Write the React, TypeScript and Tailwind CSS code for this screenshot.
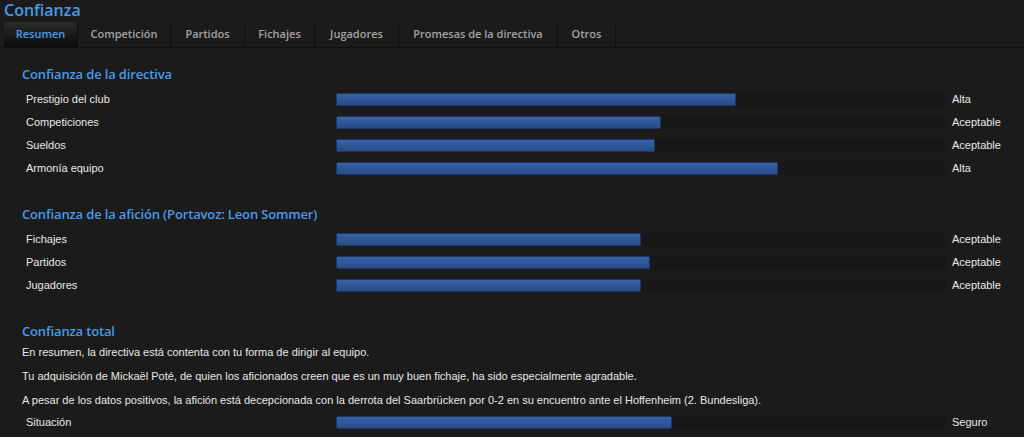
const tabs = [
  { name: 'Resumen', w: 74 },
  { name: 'Competición', w: 93 },
  { name: 'Partidos', w: 74 },
  { name: 'Fichajes', w: 70 },
  { name: 'Jugadores', w: 84 },
  { name: 'Promesas de la directiva', w: 159 },
  { name: 'Otros', w: 58 },
]

const board = [
  { label: 'Prestigio del club', fill: 400, value: 'Alta' },
  { label: 'Competiciones', fill: 325, value: 'Aceptable' },
  { label: 'Sueldos', fill: 319, value: 'Aceptable' },
  { label: 'Armonía equipo', fill: 442, value: 'Alta' },
]

const fans = [
  { label: 'Fichajes', fill: 305, value: 'Aceptable' },
  { label: 'Partidos', fill: 314, value: 'Aceptable' },
  { label: 'Jugadores', fill: 305, value: 'Aceptable' },
]

const heading = "font-['Open_Sans',sans-serif] font-semibold text-[#4a9ae6]"
const sectionHead = `h-[22px] text-[13px] leading-[24px] tracking-[-0.15px] ${heading}`

function BarRow({ label, fill, value }: { label: string; fill: number; value: string }) {
  return (
    <div className="flex h-[23px] items-center text-[11px] text-[#e8e8e8]">
      <div className="w-[314px] pl-[4px]">{label}</div>
      <div className="relative h-[13px] w-[609px] bg-[#181818] border border-[#161616]">
        <div
          className="absolute -left-px -top-px h-[13px] rounded-[1px] border border-[#1c3563] bg-gradient-to-b from-[#3663a8] to-[#284b87]"
          style={{ width: fill }}
        />
      </div>
      <div className="pl-[7px]">{value}</div>
    </div>
  )
}

export default function App() {
  return (
    <div className="h-[437px] w-full overflow-hidden bg-[#1b1b1b] font-['Liberation_Sans',Arial,sans-serif]">
      <div className={`h-[22px] pl-[4px] text-[16px] leading-[20px] ${heading}`}>Confianza</div>

      {/* tab strip */}
      <div className="flex h-[26px] border-b border-[#111111] pl-[4px]">
        {tabs.map((t, i) => (
          <div
            key={t.name}
            className={[
              "flex h-[25px] items-center justify-center text-[11px] font-semibold font-['Open_Sans',sans-serif] border-r border-[#0e0e0e]",
              i === 0
                ? 'rounded-t-[3px] bg-gradient-to-b from-[#2b2b2b] to-[#0c0c0c] text-[#4a9ae6]'
                : 'text-[#a3a3a3]',
            ].join(' ')}
            style={{ width: t.w }}
          >
            {t.name}
          </div>
        ))}
      </div>

      <div className="pl-[22px]">
        <div className={`mt-[14px] ${sectionHead}`}>Confianza de la directiva</div>
        <div className="mt-[4px]">
          {board.map((r) => (
            <BarRow key={r.label} {...r} />
          ))}
        </div>

        <div className={`mt-[22px] ${sectionHead}`}>Confianza de la afición (Portavoz: Leon Sommer)</div>
        <div className="mt-[4px]">
          {fans.map((r) => (
            <BarRow key={r.label} {...r} />
          ))}
        </div>

        <div className={`mt-[22px] ${sectionHead}`}>Confianza total</div>
        <div className="mt-[2px] text-[11px] text-[#e8e8e8] leading-[18px]">
          <p className="mb-[6px]">En resumen, la directiva está contenta con tu forma de dirigir al equipo.</p>
          <p className="mb-[6px]">
            Tu adquisición de Mickaël Poté, de quien los aficionados creen que es un muy buen fichaje, ha sido especialmente agradable.
          </p>
          <p>
            A pesar de los datos positivos, la afición está decepcionada con la derrota del Saarbrücken por 0-2 en su encuentro ante el Hoffenheim (2. Bundesliga).
          </p>
        </div>
        <div className="mt-[2px]">
          <BarRow label="Situación" fill={336} value="Seguro" />
        </div>
      </div>
    </div>
  )
}
